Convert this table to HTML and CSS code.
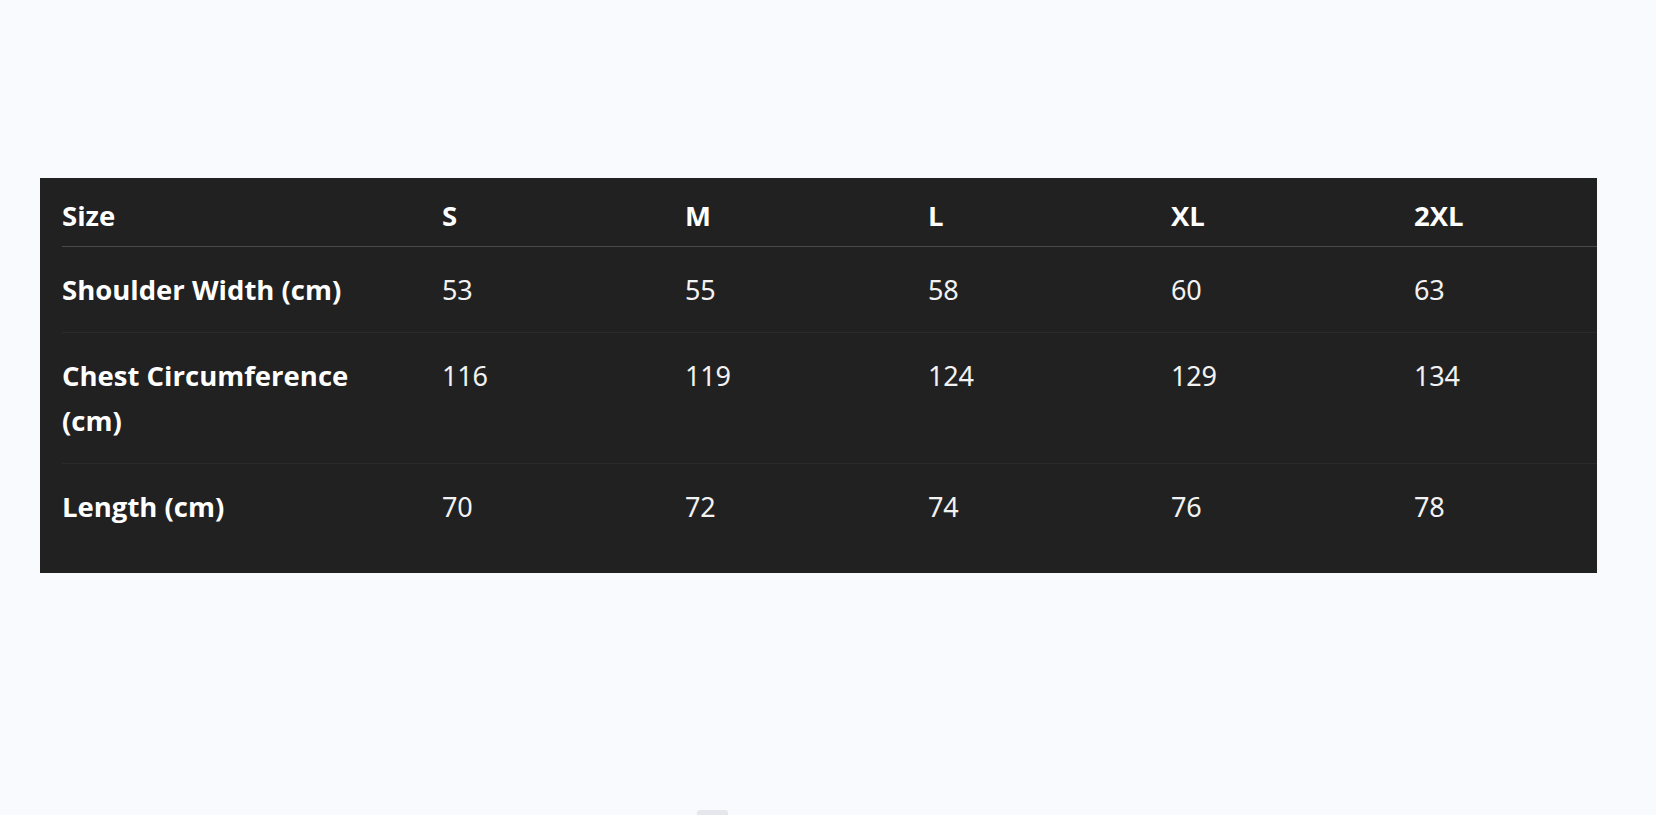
FILE: index.html
```html
<!DOCTYPE html>
<html lang="en">
<head>
<meta charset="utf-8">
<title>Size Chart</title>
<link rel="stylesheet" href="styles.css">
</head>
<body>
<main class="page">
  <section class="chart">
    <table class="size-table">
      <colgroup>
        <col class="col-label">
        <col class="col-size"><col class="col-size"><col class="col-size"><col class="col-size"><col class="col-size">
      </colgroup>
      <thead>
        <tr>
          <th>Size</th><th>S</th><th>M</th><th>L</th><th>XL</th><th>2XL</th>
        </tr>
      </thead>
      <tbody>
        <tr>
          <th>Shoulder Width (cm)</th><td>53</td><td>55</td><td>58</td><td>60</td><td>63</td>
        </tr>
        <tr>
          <th>Chest Circumference<br>(cm)</th><td>116</td><td>119</td><td>124</td><td>129</td><td>134</td>
        </tr>
        <tr>
          <th>Length (cm)</th><td>70</td><td>72</td><td>74</td><td>76</td><td>78</td>
        </tr>
      </tbody>
    </table>
  </section>
  <div class="scroll-hint"></div>
</main>
</body>
</html>
```
FILE: styles.css
```css
html, body {
  margin: 0;
  padding: 0;
  height: 100%;
  overflow: hidden;
  background: #f9fafe;
}

.page {
  height: 815px;
  padding: 178px 59px 0 40px;
  box-sizing: border-box;
  display: flex;
  flex-direction: column;
}

.chart {
  background: #212121;
  padding: 0 0 24px 22px;
  overflow: hidden;
}

.size-table {
  border-collapse: collapse;
  table-layout: fixed;
  width: 1595px;
  color: #ffffff;
  font-size: 28px;
  line-height: 45px;
}

.col-label { width: 380px; }
.col-size { width: 243px; }

.size-table th,
.size-table td {
  text-align: left;
  vertical-align: top;
  padding: 20px 0;
}

.size-table th {
  font-family: "Open Sans", "Noto Sans", sans-serif;
  font-weight: 700;
  font-size: 27.5px;
  letter-spacing: 0;
}

.size-table td {
  font-family: "Noto Sans", "Open Sans", sans-serif;
  font-weight: 400;
  font-size: 27px;
  color: #f2f2f2;
  letter-spacing: -0.2px;
}

.size-table thead th {
  padding: 15px 0 8px;
  border-bottom: 1px solid #4a4a4a;
}

.size-table tbody tr + tr th,
.size-table tbody tr + tr td {
  border-top: 1px solid #2b2b2b;
}

.scroll-hint {
  margin: auto 0 0 657px;
  width: 31px;
  height: 5px;
  border-radius: 3px 3px 0 0;
  background: #e6e7ec;
}
```
